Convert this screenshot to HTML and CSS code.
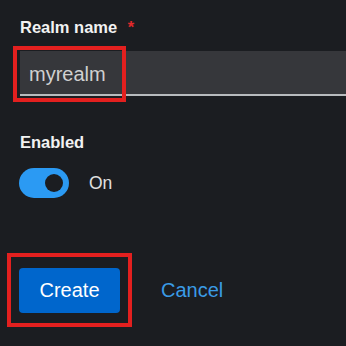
FILE: index.html
```html
<!DOCTYPE html>
<html lang="en">
<head>
  <meta charset="UTF-8">
  <meta name="viewport" content="width=device-width, initial-scale=1.0">
  <title>Create realm</title>
  <link rel="stylesheet" href="styles.css">
</head>
<body>
  <form class="realm-form">
    <div class="form-group">
      <label class="form-label" for="realmName">Realm name <span class="required">*</span></label>
      <div class="input-wrap">
        <input class="text-input" id="realmName" type="text" value="myrealm">
        <div class="highlight highlight-input"></div>
      </div>
    </div>

    <div class="form-group enabled-group">
      <span class="form-label">Enabled</span>
      <div class="switch-row">
        <span class="switch"><span class="switch-knob"></span></span>
        <span class="switch-text">On</span>
      </div>
    </div>

    <div class="actions">
      <div class="btn-wrap">
        <button type="button" class="btn-primary">Create</button>
        <div class="highlight highlight-btn"></div>
      </div>
      <a class="btn-link" href="#">Cancel</a>
    </div>
  </form>
</body>
</html>
```

FILE: styles.css
```css
html {
  background-color: #1b1d21;
}

body {
  margin: 0;
  min-height: 346px;
  background-color: #1b1d21;
  font-family: "Liberation Sans", Arial, sans-serif;
  color: #e0e0e0;
}

.realm-form {
  padding: 17px 0 30px 20px;
}

.form-label {
  display: block;
  font-size: 16.5px;
  font-weight: bold;
  line-height: 20px;
  color: #f2f2f2;
}

.required {
  color: #e0292b;
  margin-left: 6px;
}

.input-wrap {
  position: relative;
  margin-top: 14px;
}

.text-input {
  display: block;
  width: 100%;
  height: 45px;
  box-sizing: border-box;
  margin: 0;
  padding: 4px 9px 0;
  border: none;
  border-bottom: 2px solid #b8bbbe;
  background-color: #36373b;
  color: #d0d0d0;
  font-family: inherit;
  font-size: 20px;
  outline: none;
}

/* red annotation boxes */
.highlight {
  position: absolute;
  border: 4px solid #e3201f;
  box-sizing: border-box;
  pointer-events: none;
}

.highlight-input {
  left: -7px;
  top: -5px;
  width: 113px;
  height: 56px;
}

.enabled-group {
  margin-top: 36px;
}

.switch-row {
  display: flex;
  align-items: center;
  gap: 20px;
  margin-top: 16px;
}

.switch {
  display: flex;
  align-items: center;
  justify-content: flex-end;
  width: 50px;
  height: 30px;
  margin-left: -1px;
  padding-right: 6px;
  box-sizing: border-box;
  border-radius: 15px;
  background-color: #2b9af3;
}

.switch-knob {
  width: 18px;
  height: 18px;
  border-radius: 50%;
  background-color: #1b1d21;
}

.switch-text {
  font-size: 17.5px;
  color: #e0e0e0;
}

.actions {
  display: flex;
  align-items: center;
  gap: 41px;
  margin-top: 70px;
}

.btn-wrap {
  position: relative;
  margin-left: -1px;
}

.btn-primary {
  display: block;
  width: 101px;
  height: 45px;
  border: none;
  border-radius: 4px;
  background-color: #0066cc;
  color: #ffffff;
  font-family: inherit;
  font-size: 20px;
  cursor: pointer;
}

.highlight-btn {
  left: -12px;
  top: -15px;
  width: 125px;
  height: 74px;
}

.btn-link {
  font-size: 20px;
  color: #3a9be6;
  text-decoration: none;
}
```
